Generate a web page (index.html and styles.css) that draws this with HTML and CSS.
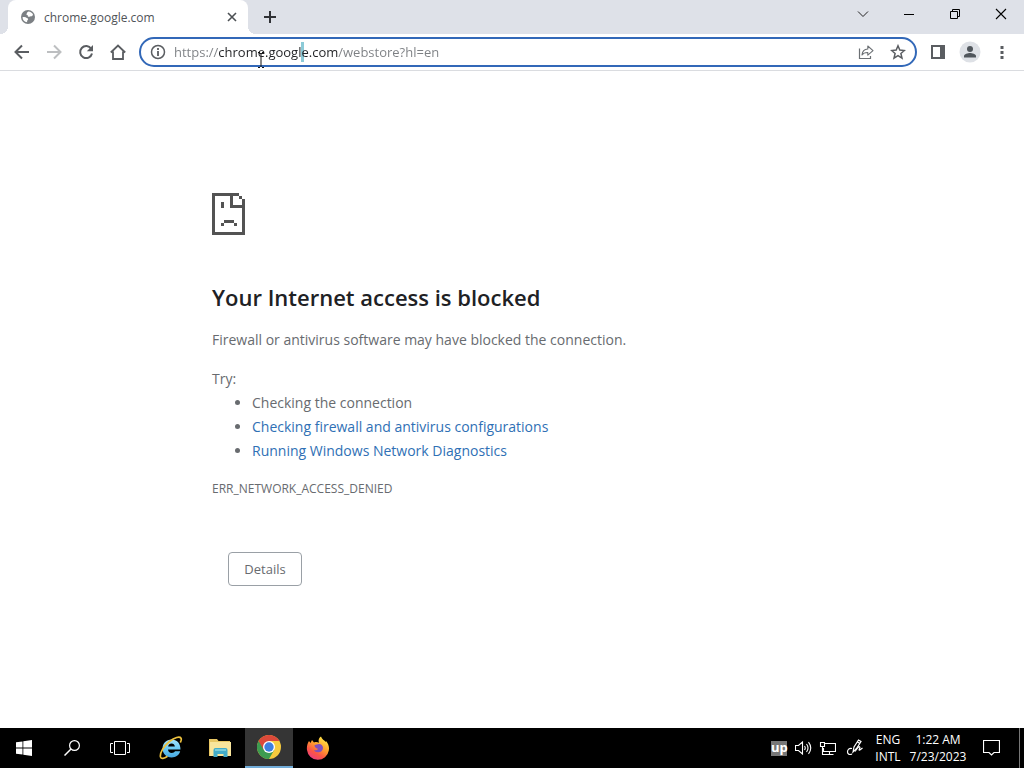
FILE: index.html
```html
<!DOCTYPE html>
<html lang="en">
<head>
  <meta charset="utf-8">
  <title>chrome.google.com</title>
  <link rel="stylesheet" href="styles.css">
</head>
<body>
  <header class="browser">
    <div class="tab-strip">
      <div class="tab">
        <svg class="favicon" width="16" height="16" viewBox="0 0 16 16">
          <circle cx="8" cy="8" r="7" fill="#7c8084"/>
          <path d="M2.500 8.200c1.800-.5 3.400-.2 4.300.9 1 .1 1.400.6 1.300 1.500-.6.5-1.100 1-1 2.700C4.500 13 2.700 11 2.500 8.200zM8.500 2.600c2 .1 3.700 1.300 4.500 3-.3 1.200-1.100 2-2.200 1.700-.9.6-1.900.6-2.900.1.100-1.100-.4-1.300-1.400-1.400.1-1.700.6-2.900 2-3.400z" fill="#fff"/>
        </svg>
        <span class="tab-title">chrome.google.com</span>
        <button class="tab-close" aria-label="Close tab">
          <svg width="10" height="10" viewBox="0 0 10 10"><path d="M1 1l8 8M9 1L1 9" stroke="#4c5054" stroke-width="1.600"/></svg>
        </button>
      </div>
      <button class="new-tab" aria-label="New tab">
        <svg width="12" height="12" viewBox="0 0 12 12"><path d="M6 0v12M0 6h12" stroke="#303236" stroke-width="2"/></svg>
      </button>
      <div class="window-controls">
        <button aria-label="Search tabs"><svg width="12" height="12" viewBox="0 0 12 12"><path d="M1 3.500l5 5 5-5" fill="none" stroke="#222"/></svg></button>
        <button aria-label="Minimize"><svg width="12" height="12" viewBox="0 0 12 12"><path d="M1 6.500h10" stroke="#000"/></svg></button>
        <button aria-label="Restore"><svg width="12" height="12" viewBox="0 0 12 12"><path d="M1.500 3.500h7v7h-7zM3.500 3.500v-2h7v7h-2" fill="none" stroke="#000"/></svg></button>
        <button aria-label="Close"><svg width="12" height="12" viewBox="0 0 12 12"><path d="M1 1l10 10M11 1L1 11" stroke="#000" stroke-width="1.100"/></svg></button>
      </div>
    </div>

    <div class="toolbar">
      <button class="tool" aria-label="Back"><svg width="16" height="16" viewBox="0 0 16 16"><path d="M15 8H2M8 1.500L1.500 8 8 14.500" fill="none" stroke="#5a5d61" stroke-width="2"/></svg></button>
      <button class="tool" aria-label="Forward"><svg width="16" height="16" viewBox="0 0 16 16"><path d="M1 8h13M8 1.500L14.500 8 8 14.500" fill="none" stroke="#bdbfc1" stroke-width="2"/></svg></button>
      <button class="tool" aria-label="Reload"><svg width="16" height="16" viewBox="0 0 16 16"><path d="M13.200 4.800A6 6 0 1 0 14 9.500" fill="none" stroke="#5a5d61" stroke-width="2"/><path d="M15 1v6.200H8.800z" fill="#5a5d61"/></svg></button>
      <button class="tool" aria-label="Home"><svg width="16" height="16" viewBox="0 0 16 16"><path d="M.8 8.500L8 1.500l7.200 7M3 7.500V15h10V7.500" fill="none" stroke="#5a5d61" stroke-width="1.800"/></svg></button>

      <div class="address-bar">
        <svg width="16" height="16" viewBox="0 0 16 16"><circle cx="8" cy="8" r="6.500" fill="none" stroke="#5a5d61" stroke-width="1.500"/><path d="M8 7v5M8 4v2" stroke="#5a5d61" stroke-width="1.800"/></svg>
        <input class="url" type="text" aria-label="Address and search bar" value="https://chrome.google.com/webstore?hl=en" spellcheck="false">
        <button class="bar-button" aria-label="Share"><svg width="16" height="16" viewBox="0 0 16 16"><path d="M1.500 4.500v10h11V12" fill="none" stroke="#6c7074" stroke-width="1.200"/><path d="M4 11C4.300 7.500 6.500 5.200 9.800 5V2l5.200 4.700-5.200 4.400V8.500C7.200 8.400 5.300 9 4 11z" fill="none" stroke="#6c7074" stroke-width="1.100" stroke-linejoin="round"/></svg></button>
        <button class="bar-button" aria-label="Bookmark"><svg width="16" height="16" viewBox="0 0 16 16"><path d="M8 1.800l1.800 4.300 4.600.4-3.500 3 1.100 4.600L8 11.700l-4 2.400 1.100-4.600-3.500-3 4.600-.4z" fill="none" stroke="#5a5d61" stroke-width="1.500"/></svg></button>
        <svg class="text-cursor" width="8" height="16" viewBox="0 0 8 16"><path d="M1 .5h2M5 .5h2M4 1v14M1 15.500h2M5 15.500h2" stroke="#111"/></svg>
      </div>

      <button class="tool" aria-label="Side panel"><svg width="14" height="14" viewBox="0 0 14 14"><path d="M1 1h12v12H1z" fill="none" stroke="#5a5d61" stroke-width="2"/><path d="M9 1h4v12H9z" fill="#5a5d61"/></svg></button>
      <button class="tool" aria-label="Profile"><svg width="22" height="22" viewBox="0 0 22 22"><circle cx="11" cy="11" r="10.500" fill="#dee1e6"/><circle cx="11" cy="8" r="3" fill="#50565c"/><path d="M5 16.500v-1.500c0-2 4-3 6-3s6 1 6 3v1.500z" fill="#50565c"/></svg></button>
      <button class="tool" aria-label="Menu"><svg width="4" height="16" viewBox="0 0 4 16"><path d="M.5 2h3v3h-3zM.5 7h3v3h-3zM.5 12h3v3h-3z" fill="#5a5d61"/></svg></button>
    </div>
  </header>

  <main class="error-page">
    <svg class="sad-page" width="34" height="42" viewBox="0 0 34 42" shape-rendering="crispEdges">
      <path d="M0 0h27v3H3v36h28V16h2v26H0z" fill="#535353"/>
      <path d="M30 15h3v27h-3zM18 3h3v9h12v3H18zM27 3h3v3h-3zM30 6h3v6h-3zM9 9h3v6H9zM12 27h10v3H12zM9 30h3v3H9zM22 30h3v3h-3z" fill="#535353"/>
    </svg>
    <h1>Your Internet access is blocked</h1>
    <p class="summary">Firewall or antivirus software may have blocked the connection.</p>
    <p>Try:</p>
    <ul class="suggestions">
      <li>Checking the connection</li>
      <li><a href="#">Checking firewall and antivirus configurations</a></li>
      <li><a href="#">Running Windows Network Diagnostics</a></li>
    </ul>
    <div class="error-code">ERR_NETWORK_ACCESS_DENIED</div>
    <button class="details">Details</button>
  </main>

  <footer class="taskbar">
    <button class="task" aria-label="Start"><svg width="16" height="16" viewBox="0 0 16 16"><path d="M0 2.300l6.500-.9v6.200H0zM7.300 1.300L16 0v7.600H7.300zM0 8.400h6.500v6.200L0 13.700zM7.300 8.400H16V16l-8.700-1.200z" fill="#fff"/></svg></button>
    <button class="task" aria-label="Search"><svg width="16" height="16" viewBox="0 0 16 16"><circle cx="10.500" cy="5.500" r="4.900" fill="none" stroke="#fff" stroke-width="1.200"/><path d="M7 9L.5 15.500" stroke="#fff" stroke-width="1.500"/></svg></button>
    <button class="task" aria-label="Task view"><svg width="20" height="14" viewBox="0 0 20 14"><path d="M4.500.5h11v13h-11zM3 2.500H.5v9H3M17 2.500h2.500v9H17" fill="none" stroke="#fff"/></svg></button>
    <div class="pinned">
      <button class="task" aria-label="Internet Explorer">
        <svg width="24" height="24" viewBox="0 0 24 24">
          <defs>
            <linearGradient id="ie" x1="0" y1="0" x2="0" y2="1">
              <stop offset="0" stop-color="#a5e2fa"/><stop offset=".5" stop-color="#6bcaf3"/><stop offset="1" stop-color="#48a9e2"/>
            </linearGradient>
          </defs>
          <path d="M12.500 3.500c5.300 0 9 3.600 9 10H9c.2 2.200 1.500 3.500 3.800 3.500 1.500 0 2.500-.6 3.200-1.700h5.200c-1.200 4-4.300 6.200-8.600 6.200-5.200 0-9-3.700-9-9s3.800-9 8.900-9zM9.100 10.500h6.800c-.3-1.900-1.500-3-3.300-3-1.900 0-3.100 1.100-3.500 3z" fill="url(#ie)" fill-rule="evenodd"/>
          <path d="M8.500 20.300C5 22.800 2.200 23.200 1.500 21 .5 17 5 10 10.500 5.500 15.500 1.500 20.700 0 22 2.200c.6 1 .2 2.600-.7 4.300" fill="none" stroke="#eec23e" stroke-width="1.700"/>
        </svg>
      </button>
      <button class="task" aria-label="File Explorer">
        <svg width="22" height="20" viewBox="0 0 22 20">
          <path d="M0 1h8l1.500 2H21v15H0z" fill="#e9c764"/>
          <path d="M1 4h21v14H1z" fill="#f9e59c"/>
          <path d="M4.500 19v-7q0-2 2-2h10q2 0 2 2v7h-4v-3h-6v3z" fill="#43acc9"/>
          <path d="M6 11h11v2H6z" fill="#79cddb"/>
        </svg>
      </button>
      <button class="task active" aria-label="Google Chrome">
        <svg width="24" height="24" viewBox="0 0 24 24">
          <circle cx="12" cy="12" r="12" fill="#f7cb3e"/>
          <path d="M1.600 6A12 12 0 0 0 12 24l5.200-9L12 12z" fill="#3d9b50"/>
          <path d="M1.600 6A12 12 0 0 1 22.400 6H12v6l-5.200 3z" fill="#db493a"/>
          <circle cx="12" cy="12" r="6" fill="#fff"/>
          <circle cx="12" cy="12" r="4.700" fill="#3d7fe0"/>
        </svg>
      </button>
      <button class="task" aria-label="Firefox">
        <svg width="24" height="24" viewBox="0 0 24 24">
          <defs>
            <linearGradient id="fire" x1=".8" y1="0" x2=".2" y2="1">
              <stop offset="0" stop-color="#fff14d"/><stop offset=".4" stop-color="#ffa22d"/><stop offset=".7" stop-color="#fb5645"/><stop offset="1" stop-color="#e93888"/>
            </linearGradient>
          </defs>
          <path d="M3 5l1.500 2L6 4l2 2.500c2-.7 3.500-.5 5 .3-1-2.500 0-5 2-6.300.7 2.500 3.500 4 4.800 5.500L20 5c2.500 3 3.500 6 2.800 9.500A11 11 0 0 1 1 14C.5 10.500 1.500 7.500 3 5z" fill="url(#fire)"/>
          <path d="M8.500 9c1.500.2 2.500-1 4.500-1 2.500 0 4 2 4 4a4.500 4.500 0 0 1-5 4.300c-2 0-3.500-1-4-2.300 2 .5 3.500 0 4-1.300-1.500-.2-3.500-1-3.500-3.700z" fill="#7f50bd"/>
        </svg>
      </button>
    </div>

    <div class="tray">
      <button class="tray-icon" aria-label="Updates"><span class="up-badge">up</span></button>
      <button class="tray-icon" aria-label="Volume"><svg width="17" height="14" viewBox="0 0 17 14"><path d="M.5 4.500h3L7.500 1v12l-4-3.500h-3zM9.500 5q1.500 2 0 4M11.500 3q3 4 0 8M13.500 1.200q4.500 5.800 0 11.600" fill="none" stroke="#fff" stroke-width="1.100"/></svg></button>
      <button class="tray-icon" aria-label="Network"><svg width="17" height="15" viewBox="0 0 17 15"><path d="M6 2.500h10.500v8h-12V7M10.500 10.500v3M6.500 13.500h8M1.500 1.500h4v4h-4zM3.500 5.500v8h3" fill="none" stroke="#fff" stroke-width="1.100"/></svg></button>
      <button class="tray-icon pen" aria-label="Pen workspace"><svg width="18" height="18" viewBox="0 0 18 18"><path d="M7 13l1-5 4.500-7 2.500 1.500-4.500 7L7 13zM11.500 3l2.500 1.500" fill="none" stroke="#fff" stroke-width="1.200"/><path d="M6 9.500c-3-.5-4.500 1-4.500 3.500S4 16 6 15M9 12.500l3-4c1.500-1.500 2.500-.5 1.500 1.200s0 1.800 1 .8l2-1.500" fill="none" stroke="#fff" stroke-width="1.200"/></svg></button>
      <div class="language">ENG<br>INTL</div>
      <div class="clock">1:22 AM<br>7/23/2023</div>
      <button class="notifications" aria-label="Notifications"><svg width="17" height="16" viewBox="0 0 17 16"><path d="M.5.5h16v12H11L8.500 15 6 12.500H.5z" fill="none" stroke="#fff" stroke-width="1.200"/></svg></button>
      <div class="show-desktop"></div>
    </div>
  </footer>
</body>
</html>
```
FILE: styles.css
```css
*,
*::before,
*::after {
  box-sizing: border-box;
}

body {
  display: flex;
  flex-direction: column;
  min-height: 100vh;
  margin: 0;
  font-family: "Open Sans", "Noto Sans", sans-serif;
  font-size: 14px;
  background-color: #fff;
  color: #686b6f;
}

button {
  display: flex;
  align-items: center;
  justify-content: center;
  padding: 0;
  border: none;
  background: none;
  font-family: inherit;
}

svg {
  display: block;
  flex: none;
}

/* Tab strip */
.tab-strip {
  display: flex;
  height: 34px;
  padding-left: 8px;
  background-color: #dee1e8;
}

.tab {
  position: relative;
  display: flex;
  align-items: center;
  width: 240px;
  padding: 0 10px 0 12px;
  border-radius: 8px 8px 0 0;
  background-color: #fff;
}

/* Curved feet of the tab */
.tab::before,
.tab::after {
  content: "";
  position: absolute;
  bottom: 0;
  width: 8px;
  height: 8px;
}

.tab::before {
  right: 100%;
  background: radial-gradient(circle at 0 0, transparent 8px, #fff 8px);
}

.tab::after {
  left: 100%;
  background: radial-gradient(circle at 100% 0, transparent 8px, #fff 8px);
}

.tab-title {
  flex: 1;
  margin-left: 8px;
  font-size: 12px;
  color: #505458;
}

.tab-close {
  width: 12px;
  height: 16px;
}

.new-tab {
  width: 44px;
}

.window-controls {
  display: flex;
  margin-left: auto;
}

.window-controls button {
  width: 46px;
  height: 28px;
}

/* Toolbar */
.toolbar {
  display: flex;
  align-items: center;
  height: 37px;
  padding: 0 6px;
  border-bottom: 1px solid #dadce0;
}

.tool {
  width: 32px;
  height: 28px;
}

.address-bar {
  position: relative;
  display: flex;
  flex: 1;
  align-items: center;
  height: 30px;
  margin: 0 5px;
  padding: 0 9px;
  border: 2px solid #3268b8;
  border-radius: 15px;
}

/* The host part is darker than the rest, with one selected letter */
.url {
  flex: 1;
  min-width: 0;
  height: 20px;
  margin-left: 8px;
  padding: 0;
  border: none;
  outline: none;
  background:
    linear-gradient(90deg, #7c7f83 44px, #202124 44px 164px, #7c7f83 164px) text,
    linear-gradient(90deg, transparent 127px, #8ccbd8 127px 130px, transparent 130px) padding-box;
  font-family: inherit;
  font-size: 13px;
  color: transparent;
}

.bar-button {
  width: 32px;
  height: 24px;
}

.bar-button:last-of-type {
  width: 16px;
  margin: 0 0 0 8px;
}

.text-cursor {
  position: absolute;
  left: 116px;
  top: 13px;
}

/* Error page */
.error-page {
  flex: 1;
  width: 100%;
  max-width: 600px;
  margin: 0 auto;
  padding-top: 122px;
  line-height: 24px;
}

h1 {
  margin: 47px 0 16px;
  font-size: 22px;
  font-weight: 600;
  line-height: 30px;
  color: #202124;
}

p {
  margin: 0;
}

.summary {
  margin-bottom: 15px;
}

.suggestions {
  margin: 0;
  padding-left: 40px;
}

a {
  color: #2f70b5;
  text-decoration: none;
}

.error-code {
  margin-top: 14px;
  font-size: 12px;
}

.details {
  width: 74px;
  height: 34px;
  margin: 51px 0 20px 16px;
  border: 1px solid #9aa0a6;
  border-radius: 4px;
  font-size: 13px;
  color: #686b6f;
}

/* Taskbar */
.taskbar {
  display: flex;
  height: 40px;
  background-color: #000;
  color: #fff;
}

.task {
  width: 48px;
  height: 40px;
}

.pinned {
  display: flex;
  gap: 1px;
  margin-left: 3px;
}

.active {
  border-bottom: 2px solid #72add9;
  background-color: #353535;
}

.tray {
  display: flex;
  align-items: center;
  margin-left: auto;
}

.tray-icon {
  width: 24px;
  height: 40px;
}

.pen {
  width: 32px;
}

.up-badge {
  width: 16px;
  height: 15px;
  background-color: #777;
  font-size: 13px;
  font-weight: 700;
  line-height: 12px;
  color: #fff;
}

.language,
.clock {
  font-size: 12px;
  line-height: 17px;
  text-align: center;
}

.language {
  width: 34px;
}

.clock {
  width: 66px;
}

.notifications {
  width: 40px;
  height: 40px;
}

.show-desktop {
  width: 5px;
  height: 40px;
  margin-left: 8px;
  border-left: 1px solid #777;
}
```
